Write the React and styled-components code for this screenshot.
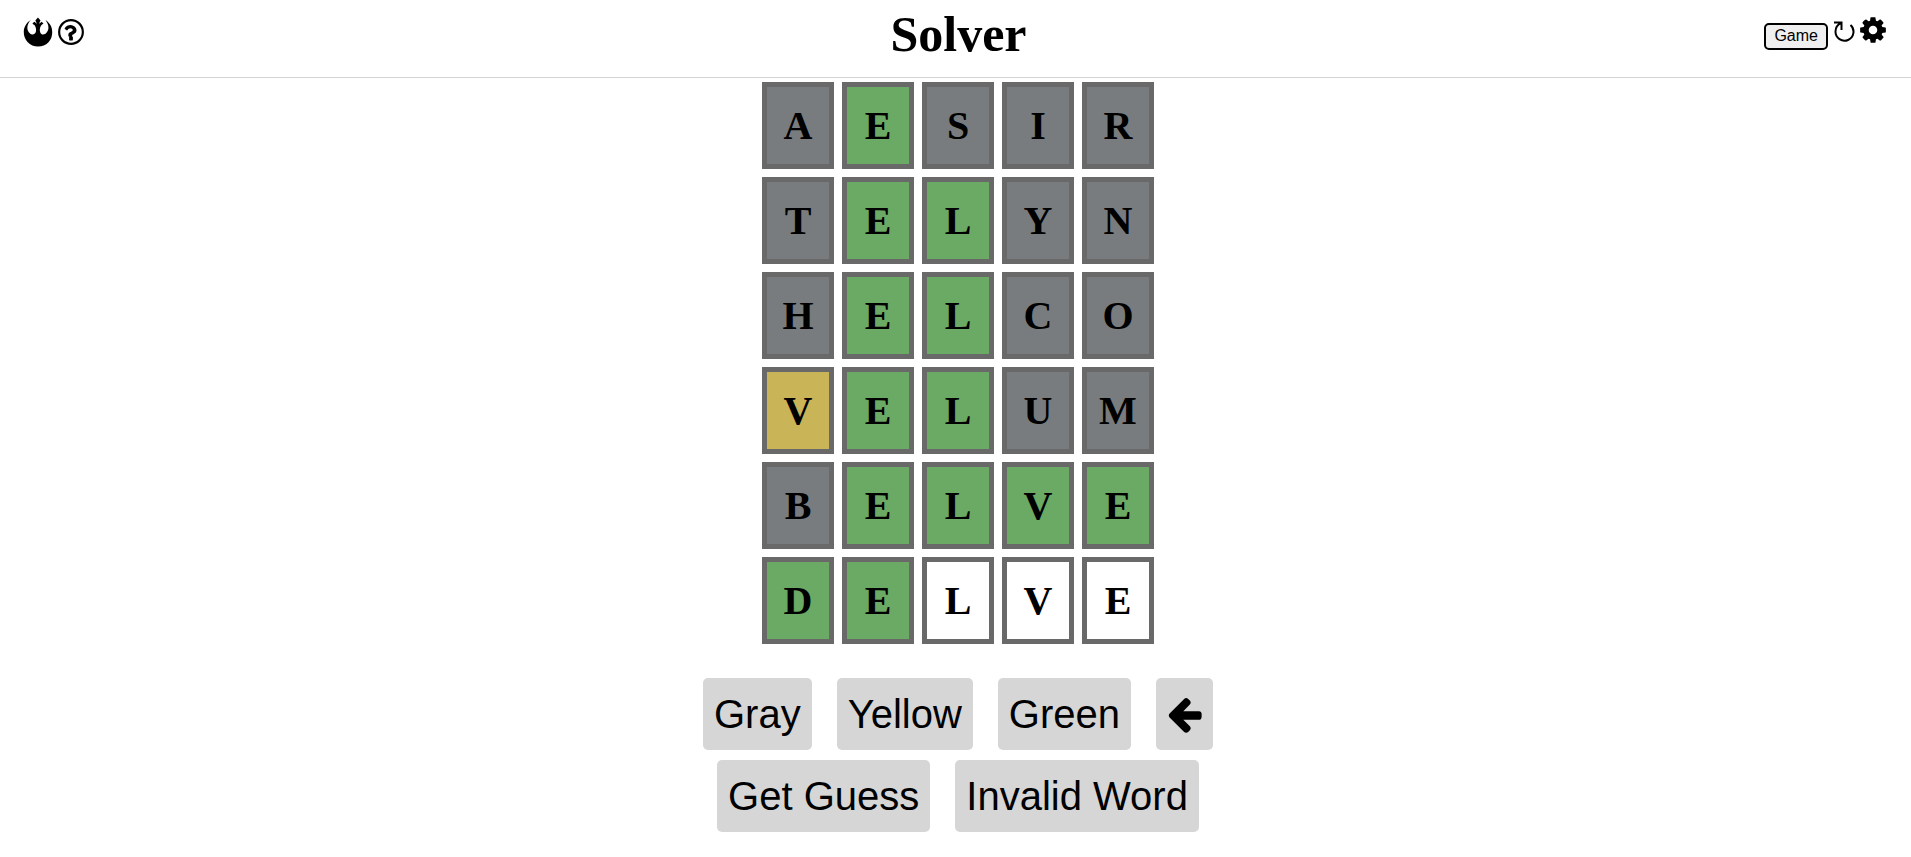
import React from "react";
import styled, { createGlobalStyle } from "styled-components";
import { FaRebel } from "react-icons/fa";

const GlobalStyle = createGlobalStyle`
  body {
    margin: 0;
    background: #fff;
    color: #000;
    font-family: "Liberation Serif", "Times New Roman", serif;
  }
`;

const Header = styled.header`
  display: grid;
  grid-template-columns: 1fr auto 1fr;
  align-items: start;
  height: 77px;
  padding: 0 25px 0 23px;
  border-bottom: 1px solid #d3d3d3;
`;

const Title = styled.h1`
  margin: 6px 0 0;
  padding-left: 8px;
  font-size: 50px;
  line-height: 56px;
`;

const Tools = styled.div`
  display: flex;
  align-items: center;
  justify-content: ${(p) => (p.$end ? "flex-end" : "flex-start")};
  gap: 5px;
  height: 30px;
  padding-top: ${(p) => (p.$end ? 15 : 17)}px;
`;

const IconButton = styled.button`
  display: flex;
  padding: 0;
  border: 0;
  background: none;
  color: inherit;
  cursor: pointer;
`;

const GameButton = styled.button`
  height: 27px;
  margin-top: 12px;
  padding: 0 8px;
  border: 2px solid #000;
  border-radius: 5px;
  background: #efefef;
  color: #000;
  font: 16px/20px "Liberation Sans", Arial, sans-serif;
  cursor: pointer;
`;

const Main = styled.main`
  display: flex;
  flex-direction: column;
  align-items: center;
  padding: 4px 0 16px 5px;
`;

const Board = styled.div`
  display: grid;
  grid-template-columns: repeat(5, 72px);
  gap: 8px;
`;

const fills = { x: "#787c7e", y: "#c9b458", g: "#6aaa64", w: "#fff" };

const Tile = styled.div`
  display: flex;
  align-items: center;
  justify-content: center;
  box-sizing: border-box;
  height: 87px;
  border: 5px solid #696969;
  background: ${(p) => fills[p.$state]};
  font-size: 40px;
  line-height: 44px;
  font-weight: bold;
`;

const Keyboard = styled.div`
  display: flex;
  flex-direction: column;
  gap: 10px;
  margin-top: 34px;
`;

const KeyRow = styled.div`
  display: flex;
  justify-content: center;
  gap: 25px;
`;

const Key = styled.button`
  display: flex;
  align-items: center;
  height: 72px;
  padding: 0 11px;
  border: 0;
  border-radius: 5px;
  background: #d6d6d6;
  color: #000;
  font: 40px/46px "Liberation Sans", Arial, sans-serif;
  cursor: pointer;
`;

const rows = [
  ["AESIR", "xgxxx"],
  ["TELYN", "xggxx"],
  ["HELCO", "xggxx"],
  ["VELUM", "yggxx"],
  ["BELVE", "xgggg"],
  ["DELVE", "ggwww"],
];

const Cog = () => (
  <svg width="26" height="30" viewBox="128 0 1536 1792" aria-hidden="true">
    <path d="M1152 896q0-106-75-181t-181-75-181 75-75 181 75 181 181 75 181-75 75-181zm512-109v222q0 12-8 23t-20 13l-185 28q-19 54-39 91 35 50 107 138 10 12 10 25t-9 23q-27 37-99 108t-94 71q-12 0-26-9l-138-108q-44 23-91 38-16 136-29 186-7 28-36 28h-222q-14 0-24.5-8.5t-11.5-21.5l-28-184q-49-16-90-37l-141 107q-10 9-25 9-14 0-25-11-126-114-165-168-7-10-7-23 0-12 8-23 15-21 51-66.5t54-70.5q-27-50-41-99l-183-27q-13-2-21-12.5t-8-23.5v-222q0-12 8-23t19-13l186-28q14-46 39-92-40-57-107-138-10-12-10-24 0-10 9-23 26-36 98.5-107.5t94.5-71.5q13 0 26 10l138 107q44-23 91-38 16-136 29-186 7-28 36-28h222q14 0 24.5 8.5t11.5 21.5l28 184q49 16 90 37l142-107q9-9 24-9 13 0 25 10 129 119 165 170 7 8 7 22 0 12-8 23-15 21-51 66.5t-54 70.5q26 50 41 98l183 28q13 2 21 12.5t8 23.5z" />
  </svg>
);

const Question = () => (
  <svg width="26" height="26" viewBox="0 0 1536 1536" aria-hidden="true">
    <circle cx="768" cy="768" r="700" fill="none" stroke="#000" strokeWidth="128" />
    <path d="M880 1072v160q0 14-9 23t-23 9h-160q-14 0-23-9t-9-23v-160q0-14 9-23t23-9h160q14 0 23 9t9 23zm213-416q0 50-15 90t-45.500 69-52 44-59.500 36q-32 18-46.500 28t-26 24-11.500 29v32q0 14-9 23t-23 9h-160q-14 0-23-9t-9-23v-68q0-35 10.500-64.500t24-47.500 39-35.500 41-25.500 44.500-21q53-25 75-43t22-49q0-42-43.500-71.500t-95.500-29.500q-56 0-95 27-29 20-80 83-9 12-25 12-11 0-19-6l-108-82q-10-7-12-20t5-23q122-192 349-192 129 0 238.500 89.500t109.500 214.500z" />
  </svg>
);

const Reload = () => (
  <svg width="22" height="26" viewBox="0 0 22 26" fill="none" stroke="#000" strokeWidth="2" aria-hidden="true">
    <path d="M1 5.500H8.500V13M8 6.200C4 8 2.500 11 2.500 14.500A9 9 0 1 0 17.500 8" />
  </svg>
);

const ArrowLeft = () => (
  <svg width="35" height="40" viewBox="128 0 1536 1792" aria-hidden="true">
    <path d="M1664 896v128q0 53-32.500 90.500t-84.500 37.500h-704l293 294q38 36 38 90t-38 90l-75 76q-37 37-90 37-52 0-91-37l-651-652q-37-37-37-90 0-52 37-91l651-650q38-38 91-38 52 0 90 38l75 74q38 38 38 91t-38 91l-293 293h704q52 0 84.500 37.500t32.500 90.500z" />
  </svg>
);

export default function App() {
  return (
    <>
      <GlobalStyle />
      <Header>
        <Tools>
          <IconButton aria-label="Home"><FaRebel size={30} /></IconButton>
          <IconButton aria-label="Help"><Question /></IconButton>
        </Tools>
        <Title>Solver</Title>
        <Tools $end>
          <GameButton>Game</GameButton>
          <IconButton aria-label="Restart"><Reload /></IconButton>
          <IconButton aria-label="Settings"><Cog /></IconButton>
        </Tools>
      </Header>
      <Main>
        <Board>
          {rows.map(([word, states]) =>
            [...word].map((letter, i) => (
              <Tile key={word + i} $state={states[i]}>{letter}</Tile>
            ))
          )}
        </Board>
        <Keyboard>
          <KeyRow>
            <Key>Gray</Key>
            <Key>Yellow</Key>
            <Key>Green</Key>
            <Key aria-label="Back"><ArrowLeft /></Key>
          </KeyRow>
          <KeyRow>
            <Key>Get Guess</Key>
            <Key>Invalid Word</Key>
          </KeyRow>
        </Keyboard>
      </Main>
    </>
  );
}
